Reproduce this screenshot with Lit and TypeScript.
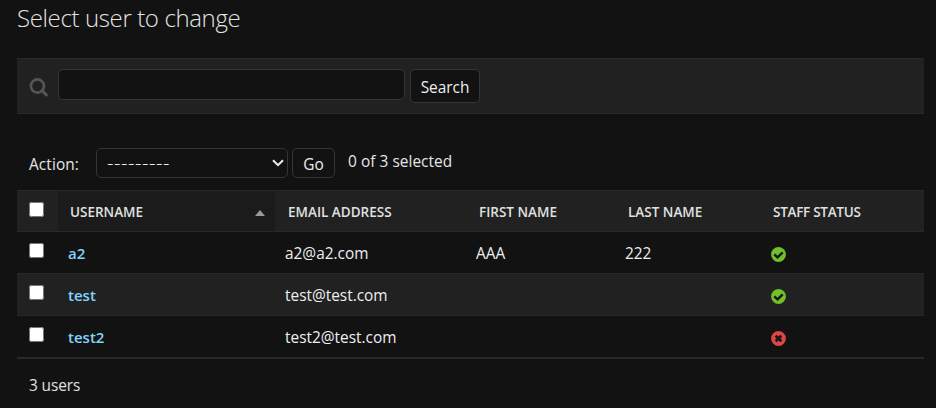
import { LitElement, html, css, svg } from "lit";
import { customElement } from "lit/decorators.js";

interface User { username: string; email: string; first: string; last: string; staff: boolean; }

const users: User[] = [
  { username: "a2", email: "a2@a2.com", first: "AAA", last: "222", staff: true },
  { username: "test", email: "test@test.com", first: "", last: "", staff: true },
  { username: "test2", email: "test2@test.com", first: "", last: "", staff: false },
];

const yesGlyph = svg`<circle cx="7.5" cy="7.5" r="7.4" fill="#70bf2b"/><path d="M3.3 7.4 6.5 10.4 11.7 5.4" fill="none" stroke="#161616" stroke-width="2.4"/>`;
const noGlyph = svg`<circle cx="7.5" cy="7.5" r="7.4" fill="#dd4646"/><path d="M4.7 4.7 10.3 10.3M10.3 4.7 4.7 10.3" fill="none" stroke="#161616" stroke-width="2.8"/>`;

@customElement("app-root")
export class AppRoot extends LitElement {
  static styles = css`
    * { box-sizing: border-box; }
    :host {
      display: block; height: 408px; overflow: hidden; padding: 0 12px 0 17px;
      background: #121212; color: #eee;
      font: 15.4px/20px "Open Sans", "Noto Sans", sans-serif;
    }
    h1 { margin: 0; padding-top: 3px; height: 58px; font-size: 24px; line-height: 30px; font-weight: 300; color: #e4e4e4; letter-spacing: -0.37px; }
    .search { display: flex; align-items: flex-start; height: 56px; padding: 10px 12px; background: #212121; border: solid #282828; border-width: 1px 0; }
    .lens { width: 19px; height: 19px; margin: 9px 10px 0 0; }
    .query { width: 347px; height: 31px; margin-right: 5px; padding: 0 6px; background: #121212; border: 1px solid #353535; border-radius: 5px; outline: 0; color: #eee; font: inherit; }
    .btn { background: #121212; border: 1px solid #353535; border-radius: 5px; color: #eee; font: inherit; padding: 0; text-align: center; }
    .find { width: 70px; height: 34px; padding-top: 4px; }
    .go { width: 43px; height: 30px; padding-top: 3px; margin-right: 13px; }
    .actions { display: flex; height: 76px; padding: 34px 12px 0; color: #e6e6e6; }
    .label { width: 67px; padding-top: 7px; letter-spacing: 0.1px; }
    .pick { display: flex; align-items: center; justify-content: space-between; width: 192px; height: 30px; padding: 0 3px 0 10px; margin-right: 4px; text-align: left; }
    .dashes { font-size: 20px; font-weight: 300; letter-spacing: 0.56px; padding-bottom: 1px; }
    .count { padding-top: 4px; letter-spacing: 0.05px; }
    .row { display: grid; grid-template-columns: 41px 217px 191px 149px 146px 1fr; height: 42px; border-bottom: 1px solid #282828; }
    .row > div { padding: 12px 10px 0; white-space: nowrap; }
    .row > .check { padding: 11px 0 0 12px; }
    .check input { display: block; width: 15px; height: 15px; margin: 0; }
    .head { border-top: 1px solid #282828; background: #212121; font-size: 13.5px; font-weight: 600; color: #e0e0e0; }
    .head > div { padding-left: 13px; padding-top: 11px; }
    .head > .sorted { display: flex; justify-content: space-between; padding-left: 12px; background: #1b1b1b; }
    .head > .tight { padding-left: 12px; letter-spacing: -0.28px; }
    .tri { width: 0; height: 0; margin-top: 8px; border: solid transparent; border-width: 0 5px 6px; border-bottom-color: #999; }
    .alt { background: #212121; }
    .row > .name { padding-top: 11px; color: #81d4fa; font-weight: 600; font-size: 15px; }
    .status { display: block; width: 15px; height: 15px; margin-top: 3px; }
    .last { height: 43px; border-bottom-width: 2px; }
    .total { padding: 17px 12px 0; color: #e0e0e0; letter-spacing: -0.1px; }
  `;

  render() {
    return html`
      <h1><span>Select user to change</span></h1>
      <div class="search">
        <svg class="lens" viewBox="0 0 18 18" fill="none" stroke="#555"><circle cx="8" cy="7.6" r="6.2" stroke-width="2.6"/><path d="M12.4 12 16.4 16" stroke-width="2.8" stroke-linecap="round"/></svg>
        <input class="query" aria-label="Search"><button class="btn find"><span>Search</span></button>
      </div>
      <div class="actions">
        <div class="label">Action:</div>
        <button class="btn pick"><span class="dashes">---------</span><svg width="12" height="8" viewBox="0 0 12 8"><path d="M1 1.2 6 6.2 11 1.2" fill="none" stroke="#eee" stroke-width="2"/></svg></button>
        <button class="btn go">Go</button>
        <div class="count">0 of 3 selected</div>
      </div>
      <div class="row head">
        <div class="check"><input type="checkbox"></div>
        <div class="sorted"><span>USERNAME</span><i class="tri"></i></div>
        <div>EMAIL ADDRESS</div><div>FIRST NAME</div><div>LAST NAME</div><div class="tight">STAFF STATUS</div>
      </div>
      ${users.map((u, i) => html`
        <div class="row ${i % 2 ? "alt" : ""} ${i === users.length - 1 ? "last" : ""}">
          <div class="check"><input type="checkbox"></div>
          <div class="name">${u.username}</div>
          <div>${u.email}</div><div>${u.first}</div><div>${u.last}</div>
          <div><svg class="status" viewBox="0 0 15 15">${u.staff ? yesGlyph : noGlyph}</svg></div>
        </div>`)}
      <div class="total">3 users</div>`;
  }
}
